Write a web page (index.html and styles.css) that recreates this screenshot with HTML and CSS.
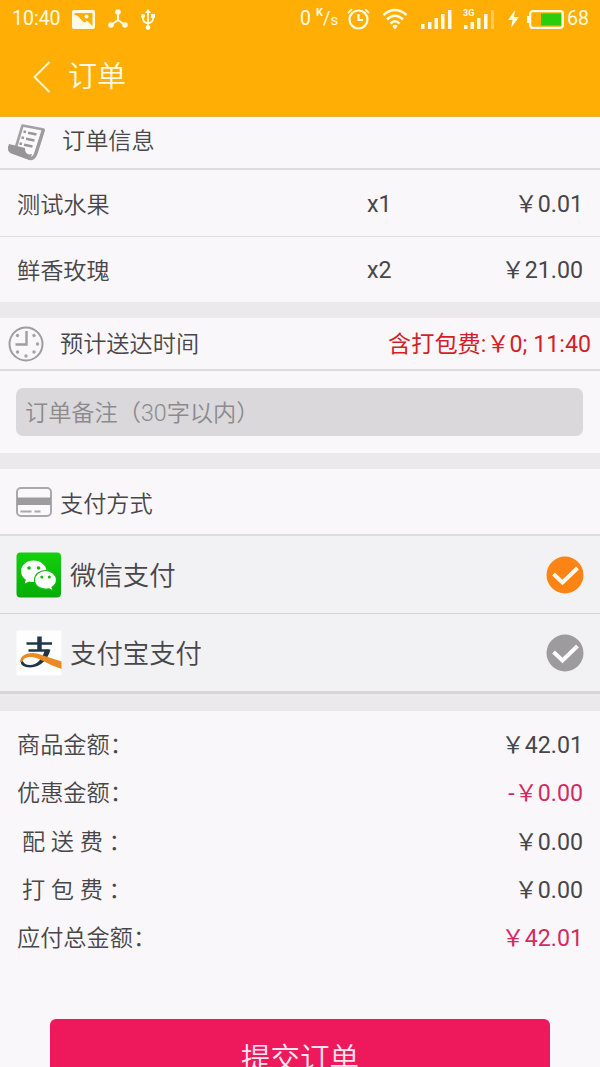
FILE: index.html
```html
<!DOCTYPE html>
<html lang="zh-CN">
<head>
<meta charset="utf-8">
<title>订单</title>
<link rel="stylesheet" href="styles.css">
</head>
<body>
<div class="screen">
  <header class="top">
    <div class="status">
      <span class="clock">10:40</span>
      <svg class="i-pic" width="23" height="19" viewBox="0 0 23 19"><rect width="23" height="19" rx="2" fill="#fffbe6"/><path d="M2.500 5C8 6 9.500 12 13 12.500L15 10.500L20.500 16V3H2.500Z" fill="#ffae05"/><path d="M2.500 5C8 6 10 12 14 16.500H2.500Z" fill="#fffbe6"/><circle cx="14.500" cy="6.500" r="2" fill="#fffbe6"/></svg>
      <svg class="i-net" width="20" height="20" viewBox="0 0 20 20"><g stroke="#fffbe6" stroke-width="2"><path d="M10 3V11L3 16M10 11L17 16" fill="none"/></g><g fill="#fffbe6"><circle cx="10" cy="3" r="2.800"/><circle cx="3" cy="16" r="2.800"/><circle cx="17" cy="16" r="2.800"/></g></svg>
      <svg class="i-usb" width="14" height="21" viewBox="0 0 14 21"><path d="M7 3V18M2 7V10Q2 13 7 14.500Q12 13 12 10V7" fill="none" stroke="#fffbe6" stroke-width="1.800"/><path d="M7 0L10 4H4Z" fill="#fffbe6"/><circle cx="7" cy="18.500" r="2.400" fill="#fffbe6"/><circle cx="2" cy="7" r="2" fill="#fffbe6"/><rect x="10" y="5" width="4" height="4" fill="#fffbe6"/></svg>
      <span class="spacer"></span>
      <span class="speed">0</span><span class="unit"><sup>K</sup>/<sub>s</sub></span>
      <svg class="i-alarm" width="23" height="22" viewBox="0 0 23 22"><g fill="none" stroke="#fffbe6" stroke-width="2.200"><circle cx="11.500" cy="11.500" r="9"/><path d="M11.500 6V12H16"/><path d="M1 5L5 1.200M22 5L18 1.200" stroke-width="1.800"/></g></svg>
      <svg class="i-wifi" width="26" height="22" viewBox="0 0 26 22"><g fill="none" stroke="#fffbe6" stroke-width="2.500"><path d="M1.500 7Q13-3 24.500 7M5 11.500Q13 4 21 11.500M8.500 15.500Q13 11 17.500 15.500"/></g><path d="M10.300 18Q13 15.500 15.700 18L13 21.500Z" fill="#fffbe6"/></svg>
      <svg class="i-sig" width="31" height="19" viewBox="0 0 31 19"><path d="M0 14h3.500v5H0zM7 12h3.500v7H7zM13.500 8H17v11h-3.500zM20 4h3.500v15H20zM27 0h3.500v19H27z" fill="#fffbe6"/></svg>
      <span class="g3"><svg width="31" height="19" viewBox="0 0 31 19"><path d="M0 15h3.500v4H0zM6.500 12H10v7H6.500zM13 8h3.500v11H13zM20 4h3.500v15H20z" fill="#fffbe6"/><path d="M27 0h3v19h-3z" fill="#ffc95c"/></svg><b>3G</b></span>
      <svg class="i-bolt" width="11" height="18" viewBox="0 0 11 18"><path d="M7 0L0 10H4.500L3 18L11 7H6Z" fill="#fffbe6"/></svg>
      <svg class="i-bat" width="37" height="19" viewBox="0 0 37 19"><rect x="3.200" y="1.200" width="32.600" height="16.600" rx="2.500" fill="none" stroke="#fffbe6" stroke-width="2.200"/><path d="M0 6h3v7H0z" fill="#fffbe6"/><rect x="14" y="3.500" width="20" height="12" fill="#2ccb0c"/></svg>
      <span class="level">68</span>
    </div>
    <div class="nav">
      <svg width="18" height="32" viewBox="0 0 18 32"><path d="M16.500 1L1.500 16L16.500 31" fill="none" stroke="#fff3cf" stroke-width="2"/></svg>
      <h1>订单</h1>
    </div>
  </header>

  <section>
    <div class="head info">
      <svg class="i-doc" width="38" height="38" viewBox="0 0 38 38"><path d="M14.500 2.500L35.500 6.500L28 30Q26 37 20 35L3 29Q0 26 1 24L8 24Z" fill="#fbf9fc" stroke="#a3a1a4" stroke-width="2.600" stroke-linejoin="round"/><path d="M1 21L17 25Q17 33 24 31Q22 38 16 35L3 30Q-1 27 1 21Z" fill="#979598"/><path d="M35.500 6.500L28 30Q26 37 20 35" fill="none" stroke="#9d9b9d" stroke-width="3.400"/><g stroke="#99979a" stroke-width="2.600"><path d="M15.500 8.500l2.500 .5M20 9.800l8.500 1.800M13.500 14.500l2.500 .5M18 15.800l8.500 1.800M11.500 20.500l2.500 .5M16 21.800l8.500 1.800"/></g></svg>
      <span>订单信息</span>
    </div>
    <div class="item"><span class="name">测试水果</span><span class="qty">x1</span><span class="price">￥0.01</span></div>
    <div class="item last"><span class="name">鲜香玫瑰</span><span class="qty">x2</span><span class="price">￥21.00</span></div>
  </section>

  <section>
    <div class="head time">
      <svg width="36" height="36" viewBox="0 0 36 36"><circle cx="18" cy="18" r="16.500" fill="none" stroke="#9f9da0" stroke-width="2"/><path d="M18.500 5V18.500H7.500" fill="none" stroke="#9f9da0" stroke-width="2.400"/><g fill="#a5a3a6"><circle cx="9.500" cy="9.500" r="1.700"/><circle cx="26" cy="9.500" r="1.700"/><circle cx="29.500" cy="18" r="1.700"/><circle cx="26" cy="26" r="1.700"/><circle cx="18" cy="30" r="1.700"/><circle cx="9.500" cy="26" r="1.700"/></g></svg>
      <span>预计送达时间</span>
      <span class="eta">含打包费:￥0; 11:40</span>
    </div>
    <div class="remark"><div class="field">订单备注（30字以内）</div></div>
  </section>

  <section class="payment">
    <div class="head pay">
      <svg width="36" height="30" viewBox="0 0 36 30"><rect x="1" y="1" width="34" height="28" rx="4" fill="#fbf9fc" stroke="#aaa8ab" stroke-width="2"/><path d="M1 10.500h34v7.500H1z" fill="#9d9b9e"/><path d="M4.500 24.500h11M18.500 24.500h6" stroke="#aaa8ab" stroke-width="2"/></svg>
      <span>支付方式</span>
    </div>
    <div class="method">
      <svg width="46" height="46" viewBox="0 0 46 46"><defs><linearGradient id="g" x2="0" y2="1"><stop stop-color="#14d00e"/><stop offset="1" stop-color="#05ac05"/></linearGradient></defs><rect x=".5" y=".5" width="44.500" height="45" rx="4" fill="url(#g)"/><path d="M17.500 8.500C10.500 8.500 5 13.300 5 19.300C5 22.800 6.800 25.800 9.800 27.700L8.800 31.500L13 29.400C22 31.500 30.500 27 30.500 19.300C30.500 13.300 24.500 8.500 17.500 8.500Z" fill="#fff"/><path d="M29.500 18.500C23.300 18.500 18.500 22.700 18.500 28C18.500 34 25 38.500 33 36.800L37 38.700L36 35.300C38.700 33.500 40.500 31 40.500 28C40.500 22.700 35.500 18.500 29.500 18.500Z" fill="#fff" stroke="#10bd0d" stroke-width="1.200"/><g fill="#13b60f"><circle cx="13" cy="16" r="1.800"/><circle cx="22.500" cy="16" r="1.800"/><circle cx="25.800" cy="25" r="1.500"/><circle cx="33.300" cy="25" r="1.500"/></g></svg>
      <span>微信支付</span>
      <svg class="check" width="38" height="38" viewBox="0 0 38 38"><circle cx="19" cy="19" r="18.500" fill="#fb8414"/><path d="M7.500 18L16.500 26.500L31.500 12" fill="none" stroke="#fff8ea" stroke-width="4"/></svg>
    </div>
    <div class="method ali">
      <svg width="46" height="46" viewBox="0 0 46 46"><rect x=".5" y=".5" width="45" height="45" fill="#fefefe"/><path d="M10.500 13.500H36M12.500 20.500H33" fill="none" stroke="#1f3648" stroke-width="2.600"/><path d="M23.500 6.500V20" stroke="#1f3648" stroke-width="4.500"/><path d="M34.500 19.500C32 29 25 37.500 14 37.500Q4.500 37 4.500 31L6.500 30Q7.500 35 14 35C21 35 26 29 29 20Z" fill="#1f3648"/><path d="M4 32C4.500 23 17 20.500 27 25.500L45.500 31.500V39Q35 35.500 26 30.500C17 25 8 26 6 32Z" fill="#e98a24"/></svg>
      <span>支付宝支付</span>
      <svg class="check" width="38" height="38" viewBox="0 0 38 38"><circle cx="19" cy="19" r="18.500" fill="#9d9b9e"/><path d="M7.500 18L16.500 26.500L31.500 12" fill="none" stroke="#fff" stroke-width="4"/></svg>
    </div>
  </section>

  <section class="totals">
    <div class="sum"><span>商品金额：</span><span class="price">￥42.01</span></div>
    <div class="sum"><span>优惠金额：</span><span class="price pink">-￥0.00</span></div>
    <div class="sum"><span class="wide">配 送 费 ：</span><span class="price">￥0.00</span></div>
    <div class="sum"><span class="wide">打 包 费 ：</span><span class="price">￥0.00</span></div>
    <div class="sum"><span>应付总金额：</span><span class="price pink">￥42.01</span></div>
  </section>
  <div class="submit">提交订单</div>
</div>
</body>
</html>
```
FILE: styles.css
```css
* { box-sizing: border-box; }
body {
  margin: 0;
  background: #f9f7fa;
  color: #484649;
  font: 350 23.2px Roboto, "Noto Sans CJK SC", sans-serif;
}
.screen { width: 600px; height: 1067px; overflow: hidden; }
svg { display: block; flex: none; }
span { white-space: nowrap; }

.top { height: 117px; background: #ffae05; border-bottom: 1px solid #e5b040; color: #fffbe6; }
.status { display: flex; align-items: center; height: 38px; padding: 0 11px 0 12px; font-size: 19.5px; font-weight: 400; line-height: 38px; }
.clock { width: 60px; }
.i-net { margin-left: 13px; }
.i-usb { margin-left: 13px; }
.spacer { flex: 1; }
.unit { display: flex; width: 22px; margin-left: 5px; font-size: 18px; }
.unit sup, .unit sub { font-size: 15px; line-height: 38px; vertical-align: baseline; }
.unit sup { margin-top: -5px; font-size: 11px; font-weight: 700; }
.unit sub { margin-top: 2px; }
.i-alarm { margin-left: 9px; }
.i-wifi { margin-left: 12px; }
.i-sig { margin-left: 13px; }
.g3 { position: relative; margin-left: 12px; }
.g3 b { position: absolute; left: -1px; top: -1px; font-size: 9px; line-height: 9px; }
.i-bolt { margin-left: 13px; }
.i-bat { margin-left: 8px; }
.level { margin-left: 3px; }
.nav { display: flex; align-items: center; height: 78px; padding-left: 33px; }
.nav h1 { margin: 0 0 0 17px; font-size: 29px; font-weight: 350; line-height: 40px; }

section { border-bottom: 16px solid #ebe9ec; }
.head { display: flex; align-items: center; border-bottom: 2px solid #dddbde; }
.info { height: 53px; padding: 0 0 2px 8px; }
.info span { margin-left: 16px; margin-top: -6px; }
.item { display: flex; align-items: center; height: 67px; padding: 0 17px 1px; border-bottom: 1px solid #dfdde0; }
.last { height: 65px; padding-bottom: 2px; border: 0; }
.name { width: 350px; }
.qty { flex: 1; margin-top: 2px; font-weight: 400; }
.price { font-weight: 400; }
.item .price { margin-top: -2px; }
.time { height: 53px; padding: 0 9px 0 8px; }
.time span { margin: -3px 0 0 16px; }
.time .eta { margin-left: auto; color: #d31f27; font-weight: 400; }
.remark { height: 82px; padding: 17px 17px 0 16px; }
.field { height: 48px; padding-left: 9px; border-radius: 7px; background: #dad8db; color: #8c8a8d; line-height: 50px; }
.pay { height: 67px; padding-left: 16px; }
.pay span { margin-left: 8px; }
.method { display: flex; align-items: center; height: 78px; padding: 0 16px; border-bottom: 1px solid #d5d3d6; background: #f2f1f3; font-size: 26.4px; }
.method span { flex: 1; margin: -2px 0 0 8px; }
.ali { height: 80px; border-bottom: 3px solid #d8d6d9; }
.payment { border-bottom-width: 17px; }
.totals { padding: 10px 17px 0; border: 0; }
.sum { display: flex; justify-content: space-between; height: 48.3px; line-height: 48.3px; }
.wide { padding-left: 5px; }
.pink { color: #d12c62; }
.submit { width: 500px; height: 75px; margin: 57px auto 0; border-radius: 6px; background: #ed195c; color: #fde5ed; font-size: 29.5px; line-height: 80px; text-align: center; }
```
